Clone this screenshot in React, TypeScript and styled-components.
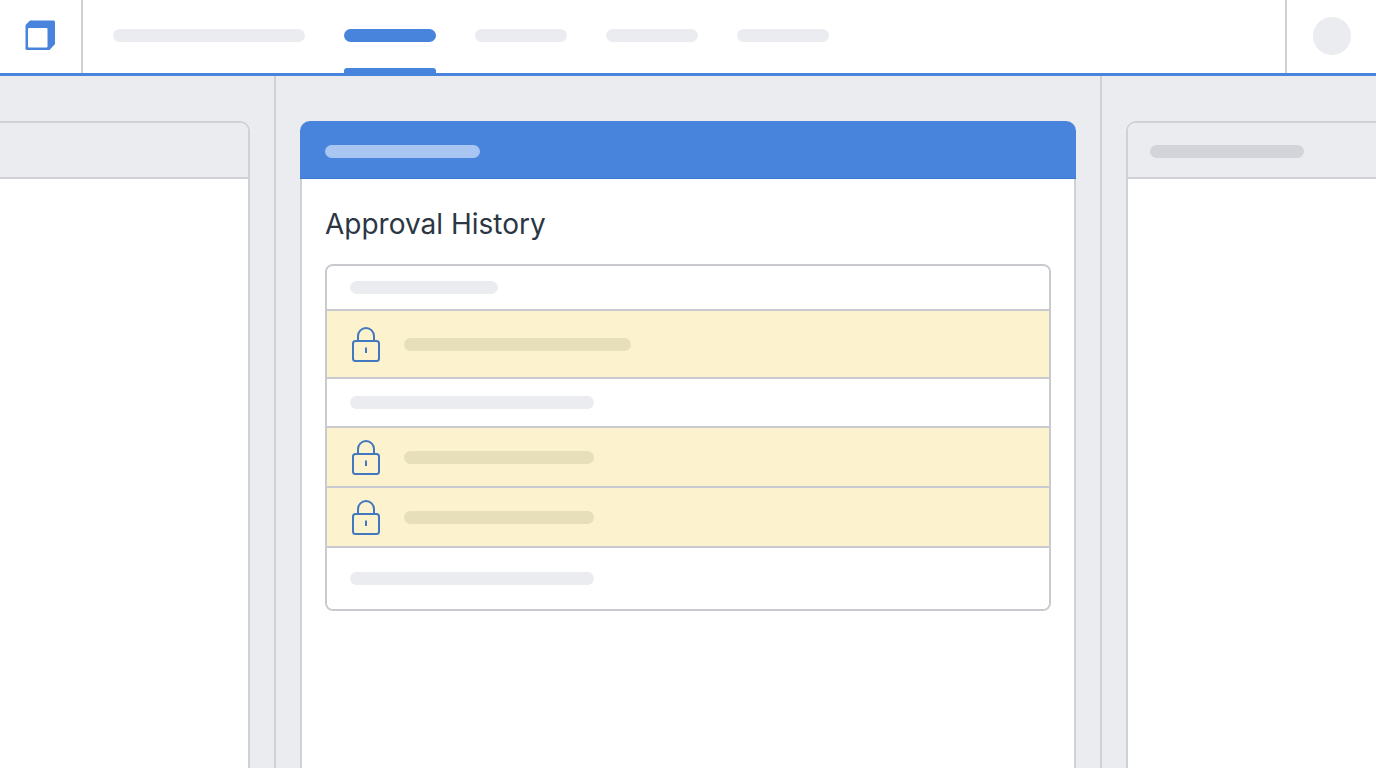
import styled, { createGlobalStyle } from 'styled-components';

const GlobalStyle = createGlobalStyle`
  html, body {
    margin: 0;
    height: 100%;
    overflow: hidden;
    background: #ebecf0;
    font-family: Inter, "Liberation Sans", sans-serif;
  }
`;

const Page = styled.div`
  height: 768px;
  display: flex;
  flex-direction: column;
  overflow: hidden;
`;

const TopBar = styled.header`
  flex: none;
  height: 76px;
  box-sizing: border-box;
  display: flex;
  background: #fff;
  border-bottom: 3px solid #4884dc;
`;

const LogoCell = styled.div`
  flex: none;
  width: 83px;
  box-sizing: border-box;
  padding: 20px 0 0 25px;
  border-right: 2px solid #d0d1d6;
`;

const Nav = styled.nav`
  flex: 1;
  display: flex;
  align-items: center;
  gap: 39px;
  padding: 0 0 2px 30px;
`;

const NavItem = styled.div<{ $width: number; $active?: boolean }>`
  position: relative;
  width: ${p => p.$width}px;
  height: 13px;
  border-radius: 7px;
  background: ${p => (p.$active ? '#4884dc' : '#ebecf0')};

  ${p =>
    p.$active &&
    `
    &::after {
      content: '';
      position: absolute;
      left: 0;
      right: 0;
      top: 39px;
      height: 5px;
      border-radius: 3px 3px 0 0;
      background: #4884dc;
    }
  `}
`;

const AvatarCell = styled.div`
  flex: none;
  width: 91px;
  box-sizing: border-box;
  display: flex;
  align-items: center;
  justify-content: flex-end;
  padding: 0 25px 2px 0;
  border-left: 2px solid #d0d1d6;
`;

const Avatar = styled.div`
  width: 38px;
  height: 38px;
  border-radius: 50%;
  background: #ebecf0;
`;

const Columns = styled.main`
  flex: 1;
  min-height: 0;
  display: grid;
  grid-template-columns: 276px 826px 1fr;
`;

const Column = styled.section<{ $side: 'left' | 'center' | 'right' }>`
  box-sizing: border-box;
  min-width: 0;
  padding: 45px ${p => (p.$side === 'right' ? '0' : '24px')} 0
    ${p => (p.$side === 'left' ? '0' : '24px')};
  border-right: ${p => (p.$side === 'right' ? 'none' : '2px solid #d0d1d6')};
  display: flex;
`;

const Panel = styled.div<{ $bleed?: 'left' | 'right'; $primary?: boolean }>`
  flex: 1;
  min-width: 0;
  box-sizing: border-box;
  background: #fff;
  border: 2px solid #d0d1d6;
  border-bottom: none;
  border-radius: 10px 10px 0 0;
  margin-left: ${p => (p.$bleed === 'left' ? '-12px' : '0')};
  margin-right: ${p => (p.$bleed === 'right' ? '-12px' : '0')};
  ${p => p.$primary && 'border-top: none;'}
`;

const PanelHead = styled.div<{ $primary?: boolean }>`
  height: ${p => (p.$primary ? '58px' : '56px')};
  box-sizing: border-box;
  display: flex;
  align-items: center;
  padding: ${p => (p.$primary ? '4px 0 0 25px' : '3px 0 0 22px')};
  margin: ${p => (p.$primary ? '0 -2px' : '0')};
  background: ${p => (p.$primary ? '#4884dc' : '#ebecf0')};
  border-bottom: ${p => (p.$primary ? '1px solid #3f78cb' : '2px solid #d0d1d6')};
  border-radius: ${p => (p.$primary ? '10px 10px 0 0' : '8px 8px 0 0')};
`;

const HeadBar = styled.div<{ $width: number; $color: string }>`
  width: ${p => p.$width}px;
  height: 13px;
  border-radius: 7px;
  background: ${p => p.$color};
`;

const PanelBody = styled.div`
  padding: 0 23px;
`;

const Title = styled.h1`
  margin: 0;
  height: 85px;
  box-sizing: border-box;
  padding-top: 28px;
  font-size: 28px;
  line-height: 34px;
  font-weight: 400;
  color: #2b3644;
`;

const HistoryList = styled.div`
  border: 2px solid #c9cacf;
  border-radius: 8px;
  overflow: hidden;
`;

const Row = styled.div<{ $height: number; $locked?: boolean }>`
  height: ${p => p.$height}px;
  box-sizing: border-box;
  display: flex;
  align-items: center;
  gap: 24px;
  padding-left: ${p => (p.$locked ? '25px' : '23px')};
  background: ${p => (p.$locked ? '#fcf2cd' : '#fff')};
  border-bottom: 2px solid #c9cacf;

  &:last-child {
    border-bottom: none;
  }
`;

const RowBar = styled.div<{ $width: number; $locked?: boolean }>`
  width: ${p => p.$width}px;
  height: 13px;
  border-radius: 7px;
  background: ${p => (p.$locked ? '#e6dfba' : '#ebecf0')};
`;

const LogoIcon = () => (
  <svg width="30" height="30" viewBox="0 0 30 30">
    <path
      d="M5 0.5H28.5Q30 0.5 30 2V24L24.5 30H2Q0.5 30 0.5 28.5V5Z"
      fill="#4884dc"
    />
    <rect x="3" y="8" width="19.5" height="19.5" rx="1" fill="#fff" />
  </svg>
);

const LockIcon = () => (
  <svg width="28" height="36" viewBox="0 0 28 36" fill="none" stroke="#4178bf" strokeWidth="2">
    <rect x="1" y="15" width="26" height="20" rx="2.5" />
    <path d="M6 15V10a8 8 0 0 1 16 0V15" />
    <path d="M14 21.5V27" />
  </svg>
);

const navItems = [
  { width: 192 },
  { width: 92, active: true },
  { width: 92 },
  { width: 92 },
  { width: 92 },
];

const rows = [
  { height: 45, bar: 148 },
  { height: 68, bar: 227, locked: true },
  { height: 49, bar: 244 },
  { height: 60, bar: 190, locked: true },
  { height: 60, bar: 190, locked: true },
  { height: 61, bar: 244 },
];

export default function App() {
  return (
    <>
      <GlobalStyle />
      <Page>
        <TopBar>
          <LogoCell>
            <LogoIcon />
          </LogoCell>
          <Nav>
            {navItems.map((item, i) => (
              <NavItem key={i} $width={item.width} $active={item.active} />
            ))}
          </Nav>
          <AvatarCell>
            <Avatar />
          </AvatarCell>
        </TopBar>
        <Columns>
          <Column $side="left">
            <Panel $bleed="left">
              <PanelHead />
            </Panel>
          </Column>
          <Column $side="center">
            <Panel $primary>
              <PanelHead $primary>
                <HeadBar $width={155} $color="#a9c6f2" />
              </PanelHead>
              <PanelBody>
                <Title>Approval History</Title>
                <HistoryList>
                  {rows.map((row, i) => (
                    <Row key={i} $height={row.height} $locked={row.locked}>
                      {row.locked && <LockIcon />}
                      <RowBar $width={row.bar} $locked={row.locked} />
                    </Row>
                  ))}
                </HistoryList>
              </PanelBody>
            </Panel>
          </Column>
          <Column $side="right">
            <Panel $bleed="right">
              <PanelHead>
                <HeadBar $width={154} $color="#d2d4d9" />
              </PanelHead>
            </Panel>
          </Column>
        </Columns>
      </Page>
    </>
  );
}
